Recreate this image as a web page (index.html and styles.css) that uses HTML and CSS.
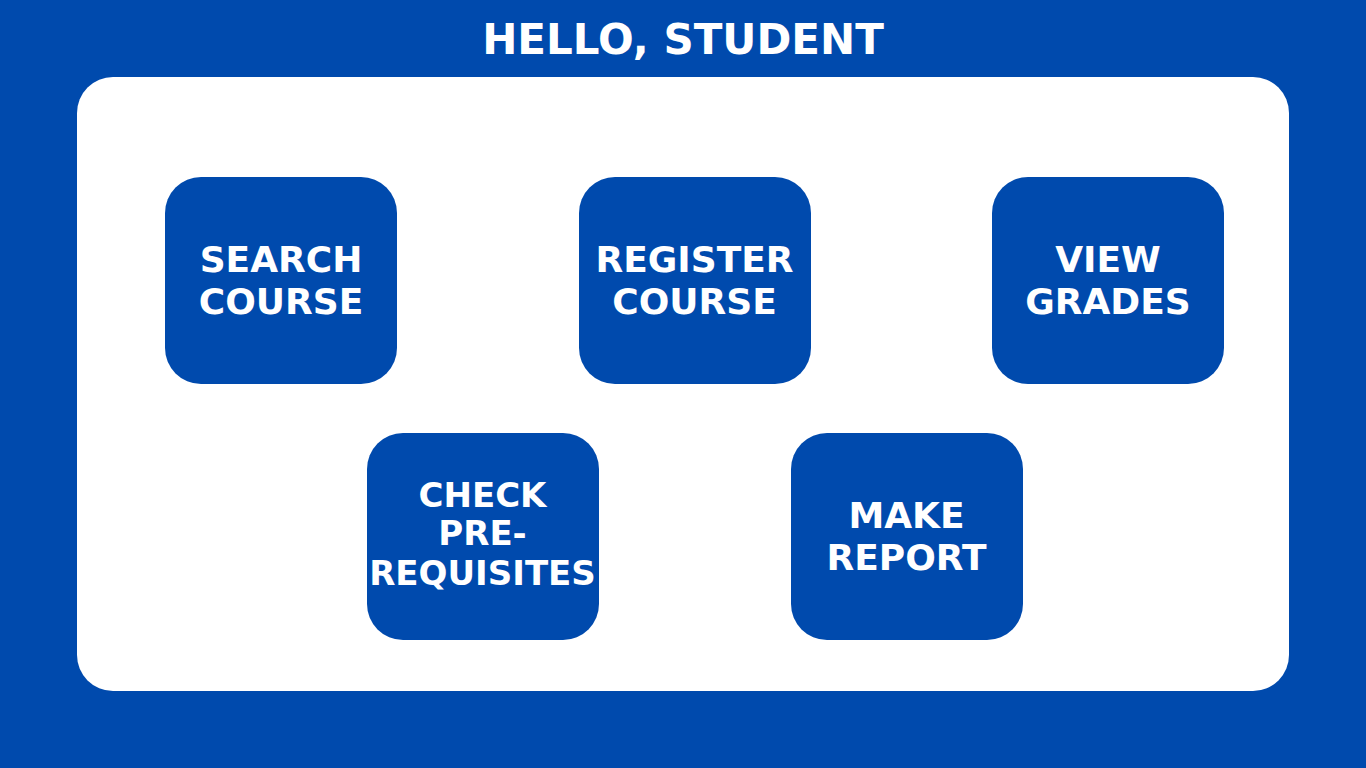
FILE: index.html
```
<!DOCTYPE html>
<html lang="en">
<head>
<meta charset="utf-8">
<meta name="viewport" content="width=device-width, initial-scale=1">
<title>Student home</title>
<link rel="stylesheet" href="styles.css">
</head>
<body>
<header class="header"><h1 class="title">HELLO, STUDENT</h1></header>
<main class="panel">
  <div class="row row-top">
    <button class="tile" type="button"><span>SEARCH</span><span>COURSE</span></button>
    <button class="tile" type="button"><span>REGISTER</span><span>COURSE</span></button>
    <button class="tile" type="button"><span>VIEW</span><span>GRADES</span></button>
  </div>
  <div class="row row-bottom">
    <button class="tile tile-long" type="button"><span>CHECK</span><span>PRE-</span><span class="loose">REQUISITES</span></button>
    <button class="tile" type="button"><span>MAKE</span><span>REPORT</span></button>
  </div>
</main>
</body>
</html>
```
FILE: styles.css
```
* {
  box-sizing: border-box;
}

body {
  margin: 0;
  min-height: 100vh;
  padding: 0 77px 77px;
  display: flex;
  flex-direction: column;
  background: #004aad;
  color: #fff;
  font-family: "DejaVu Sans", Verdana, sans-serif;
}

.header {
  padding: 16px 0 13px;
  text-align: center;
}

.title {
  margin: 0;
  font-size: 42px;
  line-height: 48px;
  font-weight: 700;
}

.panel {
  flex: 1;
  display: flex;
  flex-direction: column;
  justify-content: center;
  gap: 49px;
  padding: 100px 65px 51px 88px;
  border-radius: 36px;
  background: #fff;
}

.row {
  display: flex;
}

.row-top {
  justify-content: space-between;
}

.row-bottom {
  justify-content: center;
  gap: 192px;
}

.tile {
  width: 232px;
  min-height: 207px;
  padding: 0;
  display: flex;
  flex-direction: column;
  align-items: center;
  justify-content: center;
  border: 0;
  border-radius: 36px;
  background: #004aad;
  color: #fff;
  font: 700 36px/42px "DejaVu Sans", Verdana, sans-serif;
  cursor: pointer;
}

.tile-long {
  padding-bottom: 4px;
  font-size: 34px;
  line-height: 38px;
}

.loose {
  line-height: 42px;
}
```
